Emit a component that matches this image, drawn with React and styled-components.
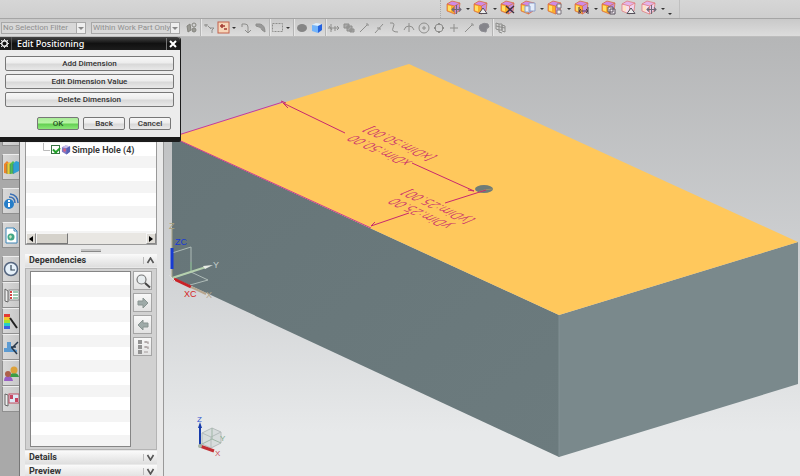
import styled, { createGlobalStyle } from "styled-components";
import { Fragment } from "react";

const colors = {
  face: "#ffc85c",
  sketch: "#c8286e",
  ink: "#333333",
  muted: "#8f8f8f",
};

const topTools = [
  { name: "Move Face", mark: "cross", arrow: true },
  { name: "Pull Face", mark: "tri", arrow: true },
  { name: "Delete Face", mark: "x" },
  { name: "Copy Face", mark: "pages", arrow: true },
  { name: "Make Coplanar", mark: "boxes", arrow: true },
  { name: "Linear Dimension", mark: "dim", arrow: true },
  { name: "Resize Face", mark: "frame" },
  { name: "Shell Body", mark: "tri", pale: true },
  { name: "Cross Section Edit", mark: "cross", pale: true, arrow: true },
];

const selectionTools = [
  { name: "Reset Filters", glyph: "group", sep: true },
  { name: "Select General Objects", glyph: "pair" },
  { name: "Top Selection Priority", glyph: "active", arrow: true },
  { name: "Select Next", glyph: "hook" },
  { name: "Select Chain", glyph: "bend", sep: true },
  { name: "Rectangle Select", glyph: "rect", arrow: true, sep: true },
  { name: "Shaded", glyph: "ball" },
  { name: "Solid Body", glyph: "cube", sep: true },
  { name: "Enable Snap Point", glyph: "snap" },
  { name: "Clear Snap Point", glyph: "layers" },
  { name: "End Point", glyph: "end" },
  { name: "Mid Point", glyph: "mid" },
  { name: "Control Point", glyph: "curve" },
  { name: "Intersection", glyph: "inter" },
  { name: "Arc Center", glyph: "center" },
  { name: "Quadrant Point", glyph: "quad" },
  { name: "Existing Point", glyph: "plus" },
  { name: "Point on Curve", glyph: "end" },
  { name: "Point on Face", glyph: "face", sep: true },
  { name: "Snap Grid", glyph: "grid" },
];

function FaceToolIcon({ mark, pale }) {
  return (
    <svg width="16" height="15" viewBox="0 0 16 15" aria-hidden="true">
      <path d="M1 4 6 1 14 3 13 11 8.5 14 1 11Z" fill={pale ? "#f6dff0" : "#fbae2c"} />
      <path d="M1 4 6 1 14 3 8.5 6Z" fill={pale ? "#e3b4ea" : "#cf8ae6"} />
      <path d="M8.5 6 14 3 13 11 8.5 14Z" fill={pale ? "#efd3ef" : "#c48fdf"} />
      <path d="M2 5.5 5 6V11.5L2 10.5Z" fill={pale ? "#ffe3c4" : "#ffdf66"} />
      <path d="M1 4 6 1 14 3 13 11 8.5 14 1 11ZM1 4 8.5 6 14 3M8.5 6V14" fill="none" stroke={pale ? "#e0706c" : "#d8693e"} strokeWidth=".7" />
      {mark === "cross" && <path d="M6 9.5H15M10.5 5V14M8 7.5 6 9.5 8 11.5M13 7.5 15 9.5 13 11.5" fill="none" stroke="#6e6876" strokeWidth="1.1" />}
      {mark === "tri" && <path d="M6 13.5 10 8 14 13.5Z" fill="#eee" stroke="#55505a" strokeWidth="1" />}
      {mark === "x" && <path d="M6 6 14 13M14 6 6 13" stroke="#3f3240" strokeWidth="1.4" />}
      {mark === "pages" && <path d="M5 6H10V12H5ZM9 3H15V11H9Z" fill="#e4edfa" stroke="#8a9dc8" strokeWidth="1" />}
      {mark === "boxes" && <path d="M10 4H14V8H10ZM10 10H14V14H10Z" fill="#eee" stroke="#7b747e" strokeWidth="1" />}
      {mark === "dim" && <path d="M5 7V14M14 7V14M5 11H14M7 9 5 11 7 13M12 9 14 11 12 13" fill="none" stroke="#4c3c50" strokeWidth="1" />}
      {mark === "frame" && <path d="M7 7H12V12H7ZM9 9H14V14H9Z" fill="#f0eaf0" stroke="#59505c" strokeWidth="1" />}
    </svg>
  );
}

const glyphs = {
  group: <g fill="#9a9a94" stroke="#85857f"><path d="M2 5 5 3 6 9 3 11Z" /><circle cx="9" cy="4" r="2" fill="none" /><circle cx="9" cy="9" r="2" /></g>,
  pair: <path d="M2 4H6M4 3V6M8 7H12L10 9V12M6 5 9 8" />,
  active: <g><rect x="1" y="1" width="11" height="11" fill="#f6d5b8" stroke="#c2604c" /><path d="M3 5H8M5 3V7M7 8H10" stroke="#a43b34" strokeWidth="1.5" /></g>,
  hook: <path d="M3 6V3H6Q9 3 9 6V11M6 9 9 12 12 9" />,
  bend: <path d="M2 3H6Q11 4 11 11L8 9Q8 6 2 5Z" fill="#999" />,
  rect: <rect x="1.5" y="2.5" width="10" height="8" strokeDasharray="2 1" />,
  ball: <ellipse cx="7" cy="7" rx="5" ry="4" fill="#858585" stroke="none" />,
  cube: <g stroke="none"><path d="M2 4 6 2 12 3 8 5Z" fill="#dcefff" /><path d="M2 4 8 5V12L2 10Z" fill="#72b4fb" /><path d="M8 5 12 3V9L8 12Z" fill="#2361df" /></g>,
  snap: <path d="M1 7H12M4 3V11M8 5V10M2 5 5 9M10 5 12 7 10 9" />,
  layers: <path d="M2 3H7V7H2ZM5 5H10V10H5ZM8 8H12V11H8Z" fill="#aaa" />,
  end: <path d="M3 11 10 4M9 3H11V5" />,
  mid: <path d="M3 12 11 3M5 7H8V9" />,
  curve: <path d="M3 2H6Q8 3 6 7T11 11" />,
  inter: <path d="M2 9Q3 5 7 5T12 9M7 2V11" />,
  center: <g><circle cx="7" cy="7" r="5" /><path d="M5 7H9M7 5V9" /></g>,
  quad: <g><circle cx="7" cy="7" r="4" /><path d="M7 2V4M7 10V12M2 7H4M10 7H12" strokeWidth="2" /></g>,
  plus: <path d="M3 7H11M7 3V11" />,
  curvePoint: <path d="M3 12Q5 8 11 3M3 9V12H6" />,
  face: <path d="M3 4Q7 1 11 3L12 6Q9 7 9 11L4 10Q1 7 3 4Z" fill="#85858b" stroke="#8c8c92" />,
  grid: <path d="M2 2 5 3V9L2 8ZM5 3H8V9H5M8 4 11 5V11L8 10ZM2 5 11 7M5 9V11L8 12" />,
};

const railTop = [
  { name: "Assembly Navigator", art: <g><rect x="1" y="7" width="7" height="5" fill="#e3dff0" stroke="#8f8b9f" /><path d="M8 10H15V15" stroke="#777" fill="none" /></g> },
  { name: "Reuse Library", art: <g><path d="M1 5 4 2 6 4V15L1 14Z" fill="#ee852a" /><path d="M4 5 7 3 9 5V15H4Z" fill="#e9cf37" /><path d="M7 5 10 2 12 4V14L7 15Z" fill="#4ebd57" /><path d="M10 5 13 2 16 3V12L10 15Z" fill="#309fd4" /><path d="M4 5V15M7 5V15M10 5V15" stroke="#49775f" strokeWidth=".6" /></g> },
  { name: "HD3D Tools", art: <g><circle cx="6" cy="11" r="5" fill="#267ec9" /><path d="M6 10V14M6 7V9" stroke="#fff" strokeWidth="2" /><path d="M6 4Q12 4 12 10M7 1Q15 2 15 10" fill="none" stroke="#386fb5" strokeWidth="1.5" /></g> },
  { name: "Web Browser", art: <g><path d="M3 1H11L14 4V16H3Z" fill="#fff" stroke="#3c84b5" /><path d="M11 1V4H14" fill="none" stroke="#3c84b5" /><circle cx="8" cy="10" r="3.5" fill="#43a686" /><path d="M6 9 8 8 9 10 7 12" fill="#c6e8bf" /></g> },
];

const railBottom = [
  { name: "History", art: <g><circle cx="8" cy="8" r="6.5" fill="#e6f1fa" stroke="#53647e" strokeWidth="1.5" /><path d="M8 4V9H12" fill="none" stroke="#345" strokeWidth="1.2" /></g> },
  { name: "Process Studio", art: <g><path d="M2 2 5 4V15L2 14Z" fill="#eee" stroke="#666" /><rect x="6" y="3" width="10" height="10" fill="#fff" stroke="#888" /><path d="M7 5H9M7 8H9M7 11H9" stroke="#d34545" strokeWidth="2" /><path d="M10 5H15M10 8H15M10 11H15" stroke="#439468" /></g> },
  { name: "System Materials", art: <g><path d="M1 1H7V4H1Z" fill="#e23a34" /><path d="M1 4H7V7H1Z" fill="#f3c62e" /><path d="M1 7H7V10H1Z" fill="#a4e42c" /><path d="M1 10H7V13H1Z" fill="#28cfc7" /><path d="M1 13H7V16H1Z" fill="#3b61e2" /><path d="M7 5 14 15" stroke="#222" strokeWidth="2" /></g> },
  { name: "Manufacturing Wizards", art: <g><path d="M1 9H4V3H8V9L14 11V13H1Z" fill="#5c9bd2" /><path d="M15 3 9 9 14 15M8 8H13" stroke="#28394c" strokeWidth="1.5" fill="none" /></g> },
  { name: "Roles", art: <g><path d="M7 12Q7 8 11 8T16 12Z" fill="#3b9d45" /><circle cx="11" cy="5" r="3.5" fill="#dca13a" /><path d="M1 16Q1 11 5 11T10 16Z" fill="#985ec5" /><circle cx="5" cy="9" r="3" fill="#ad604b" /></g> },
  { name: "System Visualization Scenes", art: <g><path d="M2 3 5 4V15L2 14Z" fill="#eee" stroke="#666" /><rect x="6" y="3" width="10" height="9" fill="#dde9f6" stroke="#c14d60" /><path d="M7 4H10V8H7ZM12 7H15V11H12Z" fill="#c64561" /></g> },
];

function Chevron({ up }) {
  return (
    <svg width="9" height="7" viewBox="0 0 9 7" aria-hidden="true">
      <path d={up ? "M1.5 6 4.5 1 7.5 6" : "M1.5 1 4.5 6 7.5 1"} fill="none" stroke="#555" strokeWidth="1.6" />
    </svg>
  );
}

function SelectionBar() {
  return (
    <Selection>
      <PickerWrap $width="85px">
        <Picker aria-label="Selection filter" disabled>
          <option>No Selection Filter</option>
        </Picker>
        <PickerArrow />
      </PickerWrap>
      <PickerWrap $width="89px">
        <Picker aria-label="Selection scope" disabled>
          <option>Within Work Part Only</option>
        </Picker>
        <PickerArrow />
      </PickerWrap>
      <Tools>
        {selectionTools.map((tool) => (
          <Fragment key={tool.name}>
            <SmallTool aria-label={tool.name}>
              <svg width="14" height="14" viewBox="0 0 14 14" fill="none" stroke="#8e8e8c">{glyphs[tool.glyph]}</svg>
            </SmallTool>
            {tool.arrow && <Caret />}
            {tool.sep && <Separator />}
          </Fragment>
        ))}
      </Tools>
    </Selection>
  );
}

function Navigator() {
  return (
    <Panel>
      <Tree>
        <TreeRow>
          <svg width="8" height="14" viewBox="0 0 8 14" aria-hidden="true"><path d="M1.5 0V7.5H8" fill="none" stroke="#bbb" /></svg>
          <Check id="hole" type="checkbox" defaultChecked />
          <svg width="10" height="11" viewBox="0 0 11 11" aria-hidden="true">
            <path d="M1 3 5 1 10 2V8L6 11 1 8Z" fill="#8278c4" /><path d="M1 3 5 1 10 2 6 4Z" fill="#c9bfeb" /><path d="M6 4 10 2V8L6 11Z" fill="#5462b5" /><ellipse cx="4" cy="6" rx="1.5" ry="2" fill="#d75f80" />
          </svg>
          <label htmlFor="hole">Simple Hole (4)</label>
        </TreeRow>
        <ScrollBar>
          <ScrollButton aria-label="Scroll left"><svg width="4" height="6" viewBox="0 0 4 6"><path d="M4 0V6L0 3Z" /></svg></ScrollButton>
          <Thumb />
          <ScrollButton aria-label="Scroll right"><svg width="4" height="6" viewBox="0 0 4 6"><path d="M0 0V6L4 3Z" /></svg></ScrollButton>
        </ScrollBar>
      </Tree>
      <Grip />
      <SectionHead><span>Dependencies</span><Chevron up /></SectionHead>
      <SectionBody>
        <Lines />
        <SideButtons>
          <SideButton aria-label="Detailed view">
            <svg width="16" height="16" viewBox="0 0 16 16"><circle cx="6.5" cy="6.5" r="4.5" fill="#e8edef" stroke="#777" strokeWidth="1.2" /><path d="M10 10 15 14.5" stroke="#444" strokeWidth="2" /></svg>
          </SideButton>
          <SideButton aria-label="Forward">
            <svg width="16" height="16" viewBox="0 0 16 16"><path d="M3 6H8V3L13 8 8 13V10H3Z" fill="#9eaaa8" stroke="#899491" /></svg>
          </SideButton>
          <SideButton aria-label="Backward">
            <svg width="16" height="16" viewBox="0 0 16 16"><path d="M13 6H8V3L3 8 8 13V10H13Z" fill="#9eaaa8" stroke="#899491" /></svg>
          </SideButton>
          <SideButton aria-label="List dependencies">
            <svg width="16" height="16" viewBox="0 0 16 16"><path d="M3 1H7V5H3ZM3 6H7V10H3ZM3 11H7V15H3Z" fill="#939393" /><path d="M9 3H13V5M9 8H13V10M9 13H13M11 2V4M11 7V9" fill="none" stroke="#a49b9b" strokeWidth="1.2" /></svg>
          </SideButton>
        </SideButtons>
      </SectionBody>
      <SectionHead><span>Details</span><Chevron /></SectionHead>
      <SectionHead><span>Preview</span><Chevron /></SectionHead>
    </Panel>
  );
}

function Viewport() {
  return (
    <Scene>
      <svg viewBox="164 37 636 439" role="img" aria-label="Block with simple hole">
        <defs>
          <linearGradient id="front" x1="0" y1="0" x2="1" y2="1">
            <stop offset="0" stopColor="#667578" />
            <stop offset="1" stopColor="#6c7b7e" />
          </linearGradient>
        </defs>
        <path d="M172 137 559 315V457L172 277Z" fill="url(#front)" />
        <path d="M559 315 798 242V384L559 457Z" fill="#7a898c" />
        <path d="M172 137 409 64 798 242 559 315Z" fill={colors.face} />
        <path d="M559 315V457" stroke="#819093" />
        <ellipse cx="484" cy="189" rx="9" ry="4" fill="#6f7c77" />
        <path d="M479 192Q484 189 493 189" stroke="#9b9069" fill="none" />

        <g fill="none" stroke={colors.sketch}>
          <path d="M172 137 283 102M172 137 371 228" stroke="#c83a97" />
          <path d="M281 101 286 103M283 103 345 133M412 163 474 191M283 103 288 108M474 191 468 190M371 226 409 213M371 226 375 222M445 203 486 190" />
        </g>
        <g fill={colors.sketch} stroke={colors.sketch} strokeWidth=".2" fontFamily="'DejaVu Sans', sans-serif" fontWeight="200" fontSize="11">
          <text transform="translate(413 162) rotate(205) skewX(-42)">xDim:50.00</text>
          <text transform="translate(437 157) rotate(205) skewX(-42)">[xDim:50.00]</text>
          <text transform="translate(454 225) rotate(205) skewX(-42)">yDim:25.00</text>
          <text transform="translate(475 220) rotate(205) skewX(-42)">[yDim:25.00]</text>
        </g>

        <g fill="none">
          <path d="M172 253 191 247V272M172 278 191 272 208 280 190 285" stroke="#aebbb7" />
          <path d="M191 271V262" stroke="#78ad83" />
          <path d="M172 278 206 267" stroke="#b5d0ae" strokeWidth="2" />
          <path d="M203 266 213 265 205 269Z" fill="#e8ece6" />
          <path d="M172 228V278" stroke="#a7a183" strokeWidth="1" />
          <path d="M172 248V269" stroke="#173bd2" strokeWidth="3" />
          <path d="M174 279 191 287" stroke="#c82227" strokeWidth="3" />
          <path d="M191 287 206 294" stroke="#b6a58d" strokeWidth="2" />
          <path d="M169 275 175 281" stroke="#ddd" />
        </g>
        <g fontFamily="'Liberation Sans', sans-serif" fontSize="9">
          <text x="175" y="245" fill="#1739d4">ZC</text>
          <text x="184" y="297" fill="#d52525">XC</text>
          <text x="213" y="268" fill="#c2ccca">Y</text>
          <text x="206" y="298" fill="#b4a68c">X</text>
          <text x="169" y="229" fill="#aaa27c">Z</text>
        </g>

        <g fill="#d7dcdc" stroke="#b5bcbc">
          <path d="M202 433 212 428 221 432V443L211 448 202 444Z" />
          <path d="M202 433 211 437 221 432M211 437V448" fill="none" />
          <path d="M212 428V439L221 443M212 439 200 445" stroke="#9fb6a6" fill="none" />
        </g>
        <path d="M200 445V426" stroke="#163bab" strokeWidth="2" />
        <path d="M198 428 200 422 202 428Z" fill="#163bab" />
        <path d="M200 446 214 451" stroke="#c22d32" strokeWidth="3" />
        <circle cx="200" cy="446" r="2" fill="#a9b5a5" />
        <g fontFamily="'Liberation Sans', sans-serif" fontSize="8">
          <text x="197" y="422" fill="#3057cf">Z</text>
          <text x="220" y="441" fill="#82a98c">Y</text>
          <text x="215" y="456" fill="#ce4956">X</text>
        </g>
      </svg>
    </Scene>
  );
}

function PositioningDialog() {
  return (
    <Dialog role="dialog" aria-labelledby="dialog-title">
      <TitleBar>
        <svg width="9" height="9" viewBox="0 0 9 9" aria-hidden="true"><circle cx="4.5" cy="4.5" r="2.8" fill="none" stroke="#fff" strokeWidth="1.4" /><path d="M4.5 0V2M4.5 7V9M0 4.5H2M7 4.5H9M1 1 2.5 2.5M8 1 6.5 2.5M1 8 2.5 6.5M8 8 6.5 6.5" stroke="#ddd" /></svg>
        <Title id="dialog-title">Edit Positioning</Title>
        <Close aria-label="Close"><svg width="8" height="8" viewBox="0 0 8 8"><path d="M1 1 7 7M7 1 1 7" stroke="#fff" strokeWidth="2" /></svg></Close>
      </TitleBar>
      <DialogBody>
        <Button>Add Dimension</Button>
        <Button>Edit Dimension Value</Button>
        <Button>Delete Dimension</Button>
        <Actions>
          <Button $primary>OK</Button>
          <Button>Back</Button>
          <Button>Cancel</Button>
        </Actions>
      </DialogBody>
    </Dialog>
  );
}

function App() {
  return (
    <Page>
      <GlobalStyle />
      <TopBar>
        <TopTools>
          {topTools.map((tool) => (
            <Fragment key={tool.name}>
              <Tool aria-label={tool.name}><FaceToolIcon mark={tool.mark} pale={tool.pale} /></Tool>
              {tool.arrow && <Caret />}
            </Fragment>
          ))}
          <Overflow />
        </TopTools>
      </TopBar>
      <SelectionBar />
      <Workspace>
        <Rail>
          {railTop.map((item) => (
            <RailButton key={item.name} aria-label={item.name}><svg width="16" height="17" viewBox="0 0 16 17">{item.art}</svg></RailButton>
          ))}
          <RailGroup>
            {railBottom.map((item) => (
              <RailButton key={item.name} aria-label={item.name}><svg width="16" height="17" viewBox="0 0 16 17">{item.art}</svg></RailButton>
            ))}
          </RailGroup>
        </Rail>
        <Navigator />
        <Viewport />
        <PositioningDialog />
      </Workspace>
    </Page>
  );
}

const GlobalStyle = createGlobalStyle`
  * {
    box-sizing: border-box;
  }
  body {
    margin: 0;
    font-family: Roboto, sans-serif;
    font-size: 8px;
    color: ${colors.ink};
  }
  button, select {
    margin: 0;
    padding: 0;
    border: 0;
    font: inherit;
    color: inherit;
    background: none;
  }
  svg {
    display: block;
    flex: none;
  }
`;

const Page = styled.div`
  display: flex;
  flex-direction: column;
  height: 100vh;
  overflow: hidden;
  background: #d0d0d0;
`;

const TopBar = styled.header`
  display: flex;
  height: 19px;
  padding-left: 55%;
  background: linear-gradient(#d6d6d6, #cecece);
  border-bottom: 1px solid #a5a5a5;
`;

const TopTools = styled.div`
  display: flex;
  align-items: flex-start;
  padding: 0 4px 0 5px;
  border-left: 1px dotted #aaaaaa;
  border-right: 1px solid #c0c0c0;
`;

const Tool = styled.button`
  width: 20px;
  height: 15px;
`;

const Caret = styled.span`
  width: 7px;
  flex: none;
  align-self: center;
  &::before {
    content: "";
    display: block;
    width: 0;
    border: 2px solid transparent;
    border-top-color: #333;
    border-bottom: 0;
  }
`;

const Overflow = styled(Caret)`
  align-self: flex-end;
  padding-bottom: 3px;
`;

const Selection = styled.div`
  display: flex;
  align-items: center;
  gap: 5px;
  height: 18px;
  padding-left: 1px;
  background: linear-gradient(#c9c9c9, #dcdcdc);
  border-bottom: 1px solid #bdbdbd;
`;

const PickerWrap = styled.div`
  position: relative;
  width: ${(props) => props.$width};
  height: 12px;
`;

const Picker = styled.select`
  appearance: none;
  width: 100%;
  height: 12px;
  padding-left: 1px;
  border: 1px solid #a8a8a8;
  background: #d8d8d8;
  color: ${colors.muted};
  opacity: 1;
  line-height: 10px;
`;

const PickerArrow = styled.span`
  position: absolute;
  top: 1px;
  right: 1px;
  width: 9px;
  height: 10px;
  padding: 4px 1px;
  background: #eee;
  border-left: 1px solid #aaa;
  pointer-events: none;
  &::before {
    content: "";
    display: block;
    width: 0;
    border: 3px solid transparent;
    border-top-color: #888;
    border-bottom: 0;
  }
`;

const Tools = styled.div`
  display: flex;
  align-items: center;
`;

const SmallTool = styled.button`
  width: 14px;
  height: 14px;
  margin-right: 1px;
`;

const Separator = styled.span`
  width: 2px;
  height: 17px;
  border-left: 1px solid #b5b5b5;
  border-right: 1px solid #e6e6e6;
`;

const Workspace = styled.main`
  position: relative;
  display: flex;
  flex: 1;
  min-height: 0;
`;

const Rail = styled.nav`
  display: flex;
  flex-direction: column;
  gap: 8px;
  flex: none;
  width: 19px;
  padding: 83px 0 0 2px;
  background: #a9a9a9;
`;

const RailGroup = styled.div`
  display: flex;
  flex-direction: column;
`;

const RailButton = styled.button`
  display: flex;
  align-items: center;
  flex: none;
  width: 17px;
  height: 26px;
  overflow: hidden;
  background: linear-gradient(90deg, #d8d8d8, #c8c8c8);
  border: 1px solid #8f8f8f;
  border-top-color: #ededed;
  border-right: 0;
`;

const Panel = styled.aside`
  flex: none;
  width: 145px;
  padding: 0 6px 0 5px;
  overflow: hidden;
  background: #e9e9e9;
  border-left: 1px solid #777;
  border-right: 1px solid #999;
`;

const Tree = styled.div`
  display: flex;
  flex-direction: column;
  height: 208px;
  padding-top: 106px;
  border: 1px solid #999;
  border-top: 0;
  background: repeating-linear-gradient(#f4f4f4 0, #f4f4f4 12px, #ffffff 12px, #ffffff 25px) 0 19px;
`;

const TreeRow = styled.div`
  display: flex;
  align-items: center;
  gap: 1px;
  height: 13px;
  padding-left: 16px;
  font-size: 9px;
  font-weight: 600;
  line-height: 12px;
`;

const Check = styled.input`
  appearance: none;
  width: 9px;
  height: 9px;
  margin: 0;
  border: 1px solid #397443;
  background: #fff;
  &:checked::before {
    content: "";
    display: block;
    width: 3px;
    height: 5px;
    margin-left: 2px;
    border: solid #22a12a;
    border-width: 0 2px 2px 0;
    transform: rotate(45deg);
  }
`;

const ScrollBar = styled.div`
  display: flex;
  height: 11px;
  margin-top: auto;
  background: #e9e7e3;
`;

const ScrollButton = styled.button`
  display: flex;
  align-items: center;
  justify-content: center;
  width: 10px;
  background: #dedbd5;
  border: 1px solid #f6f6f6;
  border-right-color: #888;
  border-bottom-color: #888;
  &:last-child {
    margin-left: auto;
  }
`;

const Thumb = styled.span`
  width: 32px;
  background: #d5d2cb;
  border: 1px solid #f6f6f6;
  border-right-color: #777;
  border-bottom-color: #777;
`;

const Grip = styled.div`
  width: 20px;
  height: 3px;
  margin: 4px auto 2px;
  background: #c4c4c4;
  border-bottom: 1px solid #888;
`;

const SectionHead = styled.button`
  display: flex;
  align-items: center;
  width: 100%;
  height: 13px;
  margin-bottom: 1px;
  padding-left: 4px;
  background: linear-gradient(#fafafa, #dedede);
  font-size: 9px;
  font-weight: 700;
  line-height: 9px;
  text-align: left;
  span {
    flex: 1;
  }
  svg {
    width: 14px;
    height: 7px;
    border-left: 1px solid #bbb;
  }
`;

const SectionBody = styled.div`
  display: flex;
  gap: 2px;
  margin-bottom: 1px;
  padding: 2px 4px;
  background: #d1d1d1;
  border: 1px solid #b4b4b4;
`;

const Lines = styled.div`
  flex: 1;
  height: 176px;
  border: 1px solid #858585;
  background: repeating-linear-gradient(#ffffff 0, #ffffff 13px, #f4f4f4 13px, #f4f4f4 25px);
`;

const SideButtons = styled.div`
  display: flex;
  flex-direction: column;
  gap: 3px;
`;

const SideButton = styled.button`
  width: 19px;
  height: 19px;
  padding: 1px;
  background: linear-gradient(#f8f8f8, #e2e2e2);
  border: 1px solid #a5a5a5;
`;

const Scene = styled.section`
  flex: 1;
  min-width: 0;
  background: linear-gradient(#b5b6b7, #ced0d2 50%, #e7e9ea 90%);
  svg {
    width: 100%;
    height: 100%;
  }
`;

const Dialog = styled.section`
  position: absolute;
  top: 0;
  left: 0;
  width: 181px;
  background: #ececec;
  border: solid #1b1b1b;
  border-width: 0 1px 5px 0;
  border-radius: 0 3px 2px 0;
`;

const TitleBar = styled.header`
  display: flex;
  align-items: center;
  height: 13px;
  background: linear-gradient(#444, #111 50%, #1c1c1c);
  border-radius: 0 3px 0 0;
  color: #fff;
`;

const Title = styled.h1`
  flex: 1;
  margin: 0 0 0 2px;
  padding-left: 5px;
  border-left: 1px solid #555;
  font-family: "Noto Sans", sans-serif;
  font-size: 9px;
  font-weight: 500;
  line-height: 13px;
`;

const Close = styled.button`
  display: flex;
  align-items: center;
  padding: 0 3px 0 2px;
  height: 12px;
  border-left: 1px solid #777;
`;

const DialogBody = styled.div`
  display: flex;
  flex-direction: column;
  gap: 3px;
  padding: 6px 6px 7px 5px;
`;

const Button = styled.button`
  height: 15px;
  border: 1px solid #777;
  border-radius: 2px;
  background: ${(props) =>
    props.$primary
      ? "linear-gradient(#a9ec98, #b9f5a6 45%, #64cf52 55%, #8be878)"
      : "linear-gradient(#f7f7f7, #ededed 45%, #d8d8d8 55%, #e9e9e9)"};
  color: ${(props) => (props.$primary ? "#285526" : colors.ink)};
  font-weight: 500;
  line-height: 12px;
`;

const Actions = styled.div`
  display: flex;
  justify-content: flex-end;
  gap: 4px;
  padding: 7px 3px 0 0;
  ${Button} {
    width: 42px;
    height: 13px;
  }
`;

export default App;
